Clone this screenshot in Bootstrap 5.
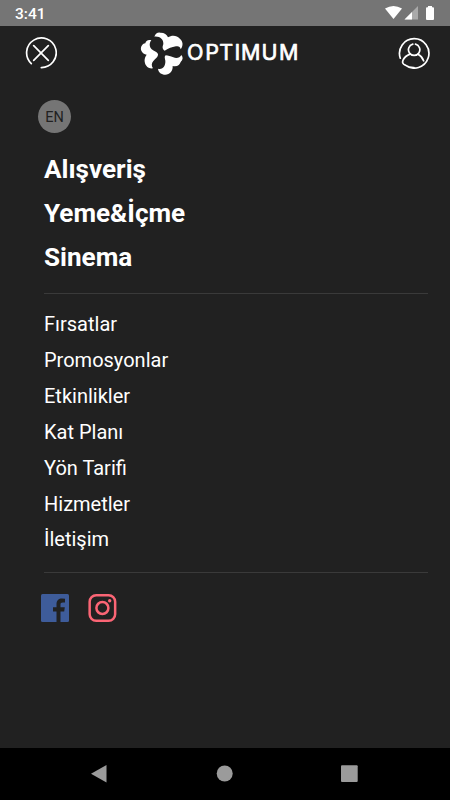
<!DOCTYPE html>
<html lang="tr">
<head>
<meta charset="utf-8">
<meta name="viewport" content="width=device-width, initial-scale=1">
<title>Optimum</title>
<link href="https://cdn.jsdelivr.net/npm/bootstrap@5.3.0/dist/css/bootstrap.min.css" rel="stylesheet">
<style>
body{background:#212121;font-family:Roboto,"Liberation Sans",sans-serif;color:#fff;height:800px;overflow:hidden}
svg{display:block;flex:none}
.status{height:26px;background:#757575;padding:1px 15px 0 15px;font-size:15.5px;font-weight:500;line-height:27px}
.status svg{margin-right:-15px;margin-top:-1px}
.topbar{height:54px;padding:0 20px 0 25px}
.logo{margin-right:17px}
.round-btn{width:32px;height:32px}
.lang{width:33px;height:33px;background:#757575;color:#212121;font-size:14.5px;padding-top:2px;margin:20px 0 0 38px}
.menu{margin:14px 22px 0 44px}
.menu a{color:#fff;text-decoration:none;display:block;white-space:nowrap}
.main-links a{font-size:26.1px;font-weight:700;line-height:44px}
.main-links{height:147px;border-bottom:1px solid #3a3a3a}
.sub-links{height:279px;padding-top:13.4px;border-bottom:1px solid #3a3a3a}
.sub-links a{font-size:20px;line-height:35.85px}
.social{padding:21px 0 0 41px;gap:19px}
.navkeys{height:52px;background:#000}
</style>
<script src="https://cdn.jsdelivr.net/npm/bootstrap@5.3.0/dist/js/bootstrap.bundle.min.js"></script>
</head>
<body class="d-flex flex-column m-0">
<div class="status d-flex justify-content-between">
  <span>3:41</span>
  <svg width="80" height="26" viewBox="370 0 80 26">
    <path d="M385 8.5Q393.500 3.500 402 8.500L393.500 19Z" fill="#fff"/>
    <path d="M418 6V19.500H404.500Z" fill="#a9a9a9"/>
    <path d="M412 12V19.500H404.500Z" fill="#fff"/>
    <path d="M428 6h4v1.300h1a1 1 0 0 1 1 1V19a1 1 0 0 1-1 1h-6a1 1 0 0 1-1-1V8.300a1 1 0 0 1 1-1h1z" fill="#fff"/>
  </svg>
</div>
<header class="topbar d-flex align-items-center justify-content-between">
  <a href="#" class="round-btn" aria-label="Kapat"><svg width="32" height="32" viewBox="0 0 32 32" fill="none" stroke="#fff" stroke-width="1.700" stroke-linecap="round"><path d="M6.300 26.600A14.800 14.800 0 1 1 16.300 30.600M8.700 8.700 23.300 23.300M23.300 8.700 8.700 23.300"/></svg></a>
  <svg class="logo" width="162" height="50" viewBox="138 28 162 50" role="img">
    <g transform="translate(138 28) scale(.33333)" fill="#fff">
      <path d="M49 26C53 17 58 13 66 14C77 13 87 19 90 28C101 20 118 22 124 31C136 40 136 54 128 64C127 56 121 53 114 55C100 57 93 61 80 68C71 62 74 55 76 48C77 35 66 24 49 26Z"/>
      <path d="M40 37C30 34 23 39 22 46C12 47 6 59 10 68C13 75 19 79 26 80C17 91 19 105 25 113C29 119 36 122 45 121C40 113 40 106 46 99C52 92 61 87 60 78C57 71 48 70 41 64C34 57 33 45 40 37Z"/>
      <path d="M60 122C61 133 70 140 82 140C95 139 105 130 104 114C118 117 126 110 128 102C135 96 136 87 130 81C126 89 116 92 106 88C97 85 91 82 83 82C78 85 81 91 82 98C83 112 75 126 60 122Z"/>
    </g>
    <text x="187 205.200 219.300 234.600 241 261.500 279" y="60" font-family="Inter,Roboto,sans-serif" font-size="21.500" font-weight="400" fill="#fff" stroke="#fff" stroke-width=".7" stroke-linejoin="round">OPTIMUM</text>
  </svg>
  <a href="#" class="round-btn" aria-label="Profil"><svg width="32" height="32" viewBox="0 0 32 32" fill="none" stroke="#fff" stroke-width="1.700" stroke-linecap="round"><path d="M2.300 21.200A14.700 14.700 0 1 1 7.300 28.100C1.800 26.500 5.500 19.500 12 17.100M20 17.300C22.500 18.500 24.500 20.500 25.600 23.800M7.300 28.100A14.700 14.700 0 0 0 16 30.600M14.800 7.200A5.700 5.700 0 1 0 17.500 7.200"/></svg></a>
</header>
<a href="#" class="lang rounded-circle d-flex align-items-center justify-content-center text-decoration-none">EN</a>
<nav class="menu">
  <div class="main-links">
    <a href="#">Alışveriş</a>
    <a href="#">Yeme&amp;İçme</a>
    <a href="#">Sinema</a>
  </div>
  <div class="sub-links">
    <a href="#">Fırsatlar</a>
    <a href="#">Promosyonlar</a>
    <a href="#">Etkinlikler</a>
    <a href="#">Kat Planı</a>
    <a href="#" lang="en">Yön Tarifi</a>
    <a href="#">Hizmetler</a>
    <a href="#">İletişim</a>
  </div>
</nav>
<div class="social d-flex">
  <a href="#" aria-label="Facebook"><svg width="28" height="28" viewBox="0 0 28 28"><rect width="28" height="28" rx="1.500" fill="#3e5c9a"/><path d="M15.500 28V17.500H12V13.300H15.500V10.300C15.500 6.400 17.700 4.500 21 4.500Q22.700 4.500 24 4.700V8.500H21.800C20 8.500 19.500 9.300 19.500 10.600V13.300H23.800L23.200 17.500H19.500V28Z" fill="#212121"/></svg></a>
  <a href="#" aria-label="Instagram"><svg width="29" height="28" viewBox="0 0 29 28" fill="none" stroke="#fb6575" stroke-width="2.500"><rect x="1.650" y="1.250" width="25.500" height="25.500" rx="6.500"/><circle cx="14.400" cy="14" r="6"/><circle cx="21.700" cy="6.700" r="1.700" fill="#fb6575" stroke="none"/></svg></a>
</div>
<footer class="navkeys mt-auto">
  <svg width="450" height="52" viewBox="0 748 450 52" fill="#9b9b9b"><path d="M91 773.700 106.500 765V782.600Z"/><circle cx="224.700" cy="773.500" r="8"/><rect x="341" y="765.200" width="16.700" height="16.700" rx="1"/></svg>
</footer>
</body>
</html>
